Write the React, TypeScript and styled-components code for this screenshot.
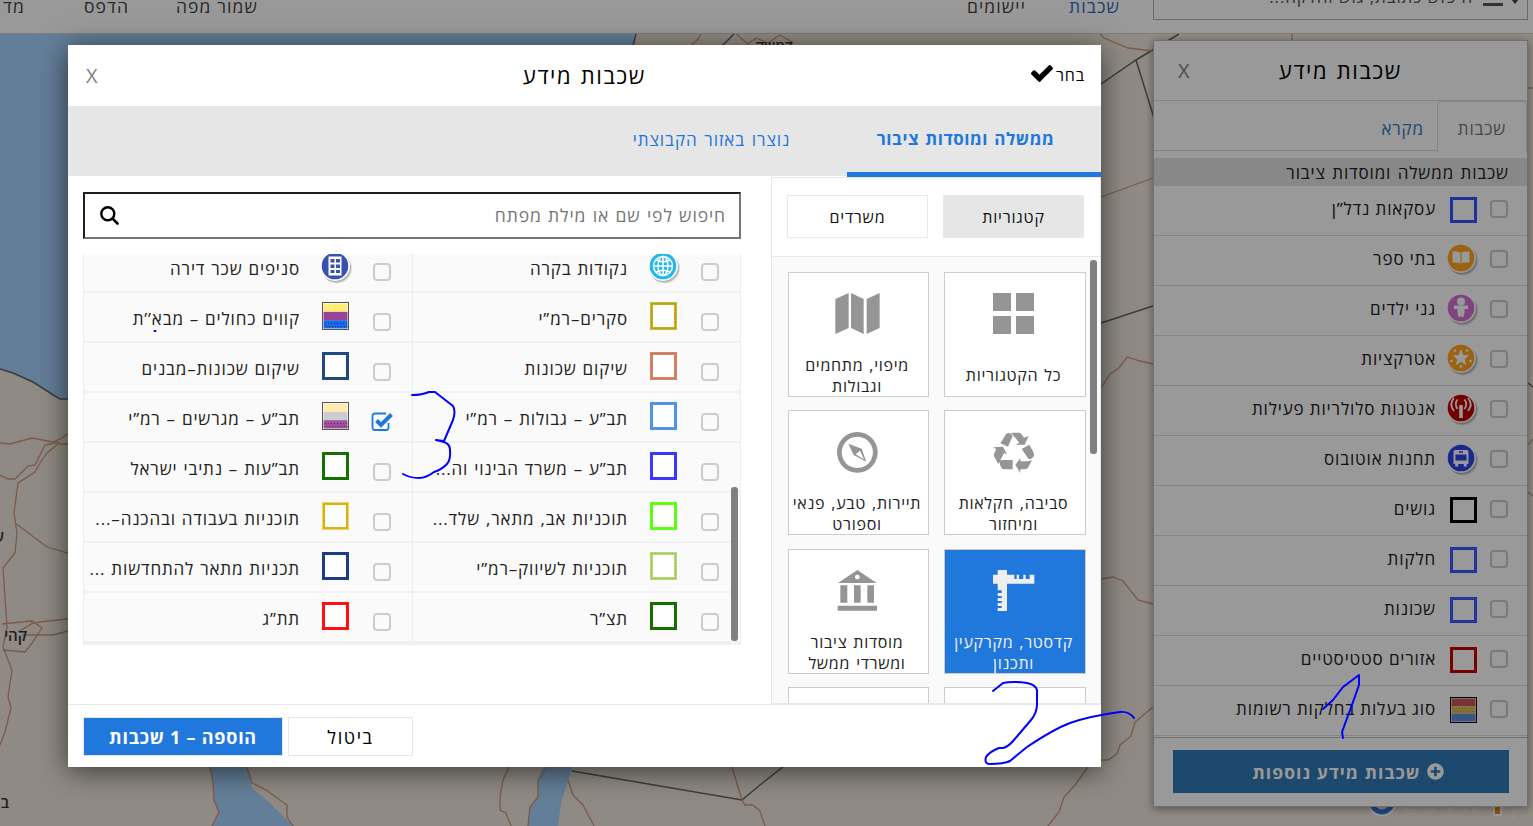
import React from "react";
import { FaPlusCircle } from "react-icons/fa";
import styled, { createGlobalStyle, css } from "styled-components";

const GlobalStyle = createGlobalStyle`
  * {
    box-sizing: border-box;
  }

  body {
    margin: 0;
    direction: rtl;
    font-family: "Open Sans", "DejaVu Sans", sans-serif;
    font-size: 17px;
    letter-spacing: 0.85px;
    word-spacing: 1.2px;
    color: #222;
    overflow: hidden;
  }

  button {
    font: inherit;
    letter-spacing: inherit;
    cursor: pointer;
  }
`;

const Page = styled.div`
  position: relative;
  width: 1533px;
  height: 826px;
  display: flex;
  flex-direction: column;
  overflow: hidden;
  background: #eee6da;
`;

const MapCanvas = styled.svg`
  position: absolute;
  inset: 0;
  direction: ltr;
`;

const TopBar = styled.header`
  position: relative;
  flex: none;
  display: flex;
  align-items: flex-start;
  height: 34px;
  padding-right: 5px;
  background: #fff;
  border-bottom: 1px solid #d0d0d0;
`;

const TopSearch = styled.div`
  display: flex;
  flex: none;
  align-items: flex-end;
  width: 375px;
  height: 20px;
  padding: 0 8px 11px 0;
  border: 1px solid #b0b0b0;
  border-top: 0;
  overflow: hidden;
  color: #555;
`;

const Caret = styled.span`
  width: 8px;
  height: 5px;
  margin-bottom: 4px;
  border: 4px solid transparent;
  border-top: 5px solid #444;
  border-bottom: 0;
`;

const MenuBar = styled.span`
  width: 20px;
  height: 3px;
  margin: 0 8px 2px 10px;
  background: #555;
`;

const SearchHint = styled.span`
  line-height: 24px;
  margin-bottom: -1px;
  word-spacing: 0;
  white-space: nowrap;
`;

const TopLink = styled.a<{ $gap: number; $active?: boolean }>`
  flex: none;
  margin-right: ${({ $gap }) => $gap}px;
  line-height: 24px;
  margin-top: -6px;
  font-size: 17.5px;
  letter-spacing: 1.1px;
  word-spacing: 0;
  white-space: nowrap;
  color: ${({ $active }) => ($active ? "#2d6fc0" : "#444")};
`;

const SidePanel = styled.aside`
  position: relative;
  display: flex;
  flex-direction: column;
  width: 375px;
  height: 767px;
  margin: 6px 5px 0 0;
  background: #fff;
  border: 1px solid #bbb;
  box-shadow: 0 2px 8px rgba(0, 0, 0, 0.4);
`;

const SideHeader = styled.div`
  display: flex;
  align-items: center;
  height: 60px;
  padding: 0 125px 0 24px;
  border-bottom: 1px solid #ddd;
`;

const Title = styled.h2`
  flex: 1;
  margin: -2px 0 0;
  font-size: 22px;
  font-weight: 400;
  letter-spacing: 1.6px;
  color: #000;
`;

const Close = styled.span`
  font-size: 20px;
  font-weight: 500;
  letter-spacing: 0;
  color: #808080;
`;

const SideTabs = styled.div`
  display: flex;
  height: 50px;
  margin-bottom: 7px;
  border-bottom: 1px solid #ddd;
`;

const SideTab = styled.span<{ $active?: boolean }>`
  display: flex;
  align-items: center;
  justify-content: center;
  height: 51px;
  padding: 3px 13px 0;
  color: #337ab7;

  ${({ $active }) =>
    $active &&
    css`
      width: 90px;
      color: #777;
      background: #fff;
      border: 1px solid #ddd;
      border-bottom: 0;
      border-radius: 4px 4px 0 0;
    `}
`;

const GroupTitle = styled.div`
  height: 28px;
  padding-right: 18px;
  line-height: 29px;
  background: #e3e3e3;
`;

const SideRow = styled.div`
  display: flex;
  align-items: center;
  height: 50px;
  padding: 0 19px 4px 0;
  word-spacing: 0;
  border-bottom: 1px solid #ddd;
`;

const SideFooter = styled.div`
  flex: 1;
  margin-top: 1px;
  padding: 12px 18px 12px 19px;
  border-top: 1px solid #bbb;
`;

const MoreLayers = styled.button`
  display: flex;
  align-items: center;
  justify-content: center;
  gap: 6px;
  width: 100%;
  height: 43px;
  padding: 0 0 0 14px;
  border: 0;
  font-size: 17.5px;
  font-weight: 700;
  letter-spacing: 1.1px;
  color: #fff;
  background: #337ab7;
`;

const Checkbox = styled.span`
  flex: none;
  width: 18px;
  height: 18px;
  border: 2px solid #ccc;
  border-radius: 4px;
`;

const Marker = styled.svg<{ $shift?: number; $lift?: number }>`
  flex: none;
  display: block;
  margin-top: ${({ $lift = 0 }) => -$lift}px;
  margin-right: ${({ $shift = 0 }) => $shift}px;
  overflow: visible;
`;

const SwatchCell = styled.span<{ $wide?: boolean }>`
  display: flex;
  flex: none;
  justify-content: center;
  width: ${({ $wide }) => ($wide ? 73 : 54)}px;
  padding: ${({ $wide }) => ($wide ? "0 3px 0 0" : "2px 0 0 1px")};
`;

const Overlay = styled.div`
  position: absolute;
  inset: 0;
  background: rgba(0, 0, 0, 0.4);
`;

const Modal = styled.section`
  position: absolute;
  top: 45px;
  left: 68px;
  display: flex;
  flex-direction: column;
  width: 1033px;
  height: 722px;
  background: #fff;
  box-shadow: 0 4px 26px rgba(0, 0, 0, 0.6);
`;

const ModalHeader = styled.div`
  display: flex;
  align-items: center;
  height: 61px;
  padding: 0 16px 0 18px;
`;

const Pick = styled.span`
  display: flex;
  align-items: center;
  gap: 3px;
  width: 439px;
  margin-top: -2px;
  font-size: 16px;
  color: #000;

  svg {
    margin-top: -3px;
  }
`;

const ModalTabs = styled.nav`
  display: flex;
  height: 70px;
  background: #e6e6e6;
`;

const ModalTab = styled.span<{ $active?: boolean }>`
  display: flex;
  align-items: center;
  justify-content: center;
  width: ${({ $active }) => ($active ? 254 : 271)}px;
  height: 71px;
  padding: ${({ $active }) => ($active ? "0 17px 1px 0" : "0 0 4px")};
  font-weight: ${({ $active }) => ($active ? 700 : 400)};
  letter-spacing: ${({ $active }) => ($active ? 0.55 : 0.95)}px;
  color: #2077dc;
  border-bottom: ${({ $active }) => ($active ? "5px solid #2077dc" : "0")};
`;

const ModalBody = styled.div`
  display: flex;
  height: 529px;
  border-bottom: 1px solid #e6e8e8;
`;

const Categories = styled.div`
  display: flex;
  flex-direction: column;
  width: 330px;
  margin-top: 1px;
  border: 1px solid #e8e8e8;
`;

const Modes = styled.div`
  display: flex;
  flex: none;
  gap: 15px;
  height: 79px;
  padding: 17px 16px 0 0;
  border-bottom: 1px solid #e6e6e6;
`;

const Mode = styled.button<{ $active?: boolean }>`
  width: 141px;
  height: 43px;
  padding: 0;
  font-size: 16px;
  letter-spacing: 0.8px;
  color: #111;
  background: ${({ $active }) => ($active ? "#e6e6e6" : "#fff")};
  border: 1px solid #e8e8e8;
`;

const CategoryScroll = styled.div`
  display: flex;
  gap: 3px;
  flex: 1;
  min-height: 0;
  padding: 3px 3px 0 0;
  overflow: hidden;
  background: #fafafa;
`;

const ScrollThumb = styled.div<{ $height: number }>`
  flex: none;
  width: 7px;
  height: ${({ $height }) => $height}px;
  border-radius: 3px;
  background: #808080;
`;

const CardGrid = styled.div`
  display: grid;
  grid-template-columns: 142px 141px;
  grid-auto-rows: 125px;
  gap: 13.5px 15px;
  margin: 11.8px 1px 0 0;
`;

const Card = styled.div<{ $active?: boolean }>`
  display: flex;
  flex-direction: column;
  align-items: center;
  justify-content: space-between;
  padding: 20px 4px 0 1px;
  overflow: hidden;
  color: ${({ $active }) => ($active ? "#f2f2f2" : "#222")};
  background: ${({ $active }) => ($active ? "#2077dc" : "#fff")};
  border: 1px solid #ccc;

  svg {
    flex: none;
    fill: ${({ $active }) => ($active ? "#eee" : "#959595")};
  }
`;

const CardLabel = styled.div`
  display: flex;
  align-items: center;
  height: 42px;
  margin-bottom: -1px;
  font-size: 16px;
  letter-spacing: 0.7px;
  line-height: 21px;
  text-align: center;
  white-space: pre;
`;

const Layers = styled.div`
  flex: 1;
  padding: 16px 30px 0 15px;
`;

const SearchBox = styled.div`
  display: flex;
  align-items: center;
  justify-content: space-between;
  height: 47px;
  margin-bottom: 15px;
  padding: 0 13px 1px 15px;
  border: 2px solid;
  border-color: #1f1f1f #767676 #767676 #1f1f1f;
  font-size: 17.5px;
  letter-spacing: 0.9px;
  word-spacing: 0.9px;
  line-height: 22px;
  color: #757575;
`;

const LayerList = styled.div`
  position: relative;
  height: 391px;
  overflow: hidden;
  background: #fafafa;
  border: 1px solid #eee;
  border-top: 0;
  border-bottom: 3px solid #f0f2f2;
`;

const LayerGrid = styled.div`
  display: grid;
  grid-template-columns: 328px 328px;
  grid-auto-rows: 50px;
  margin-top: -11px;
`;

const LayerCell = styled.div`
  display: flex;
  align-items: center;
  padding: 0 21px 2px 6px;
  border-bottom: 2px solid #f0f2f2;
  border-left: 1px solid #eceeee;

  &:nth-child(even) {
    border-left: 0;
  }
`;

const CellCheck = styled.span`
  flex: none;
  width: 18px;
  margin-top: 11px;
`;

const LayerName = styled.span`
  margin-top: 5px;
  word-spacing: 0.7px;
  white-space: nowrap;
`;

const ListThumb = styled(ScrollThumb)`
  position: absolute;
  top: 233px;
  right: 2px;
`;

const ModalFooter = styled.div`
  display: flex;
  justify-content: flex-end;
  gap: 5px;
  padding: 12px 0 0 15px;
`;

const FooterButton = styled.button<{ $primary?: boolean }>`
  width: ${({ $primary }) => ($primary ? 200 : 125)}px;
  height: 39px;
  padding: 0;
  font-size: 18px;
  font-weight: ${({ $primary }) => ($primary ? 700 : 400)};
  letter-spacing: ${({ $primary }) => ($primary ? 0.75 : 1.6)}px;
  color: ${({ $primary }) => ($primary ? "#fff" : "#000")};
  background: ${({ $primary }) => ($primary ? "#2077dc" : "#fff")};
  border: 1px solid #e6e6e6;
`;

const Ink = styled.svg`
  position: absolute;
  inset: 0;
  fill: none;
  stroke: #0000ff;
  stroke-width: 2;
  stroke-linecap: round;
  stroke-linejoin: round;
`;

type MarkerKind = "book" | "child" | "star" | "antenna" | "bus" | "globe" | "building";

interface Layer {
  name: string;
  color?: string;
  edge?: string;
  dotted?: boolean;
  bands?: string[];
  marker?: MarkerKind;
  checked?: boolean;
}

const sideLayers: Layer[] = [
  { name: "עסקאות נדל”ן", color: "#3550ff" },
  { name: "בתי ספר", marker: "book" },
  { name: "גני ילדים", marker: "child" },
  { name: "אטרקציות", marker: "star" },
  { name: "אנטנות סלולריות פעילות", marker: "antenna" },
  { name: "תחנות אוטובוס", marker: "bus" },
  { name: "גושים", color: "#000" },
  { name: "חלקות", color: "#3550ff", dotted: true },
  { name: "שכונות", color: "#3550ff", dotted: true },
  { name: "אזורים סטטיסטיים", color: "#c80000" },
  { name: "סוג בעלות בחלקות רשומות", bands: ["#c85858", "#d6c060", "#5f8ed8"] },
];

const modalLayers: Layer[] = [
  { name: "נקודות בקרה", marker: "globe" },
  { name: "סניפים שכר דירה", marker: "building" },
  { name: "סקרים–רמ”י", color: "#d9a514", edge: "#a8c83a", dotted: true },
  { name: "קווים כחולים – מבא’’ת", bands: ["#ffee78", "#984298", "#1c68e8"] },
  { name: "שיקום שכונות", color: "#d98268", dotted: true },
  { name: "שיקום שכונות–מבנים", color: "#1d4b80" },
  { name: "תב”ע – גבולות – רמ”י", color: "#4f92e6" },
  { name: "תב”ע – מגרשים – רמ”י", bands: ["#ffeab0", "#cccccc", "#a050a0"], checked: true },
  { name: "תב”ע – משרד הבינוי וה...", color: "#3838ff" },
  { name: "תב”עות – נתיבי ישראל", color: "#147000" },
  { name: "תוכניות אב, מתאר, שלד...", color: "#5cff10" },
  { name: "תוכניות בעבודה ובהכנה–...", color: "#dbb010", edge: "#ecd860" },
  { name: "תוכניות לשיווק–רמ”י", color: "#b4dc70", dotted: true },
  { name: "תכניות מתאר להתחדשות ...", color: "#1d3c88" },
  { name: "תצ”ר", color: "#147000" },
  { name: "תת”ג", color: "#ff1010" },
];

const markerColors: Record<MarkerKind, string> = {
  book: "#ffa51e",
  child: "#d870d0",
  star: "#ffa51e",
  antenna: "#c00000",
  bus: "#2c44e8",
  globe: "#22b8ec",
  building: "#3850b0",
};

const MarkerGlyph: React.FC<{ kind: MarkerKind }> = ({ kind }) => {
  switch (kind) {
    case "book":
      return <path d="M6.500 8.500q4.500-.500 8 1v11q-3-1.500-8-1zM15.500 9.500q3.500-1.500 8-1v11q-5-.500-8 1z" fill="#fff" />;
    case "child":
      return (
        <g fill="#fff">
          <circle cx="15" cy="8.500" r="4" />
          <path d="M8 12.500h14v3.500h-3.500V20l-1 4h-2l-.5-2-.5 2h-2l-1-4v-4H8z" />
        </g>
      );
    case "star":
      return (
        <g fill="#fff">
          <path d="M15 6l2.400 6 6 .3-4.700 3.900 1.700 6.100-5.400-3.500-5.400 3.500 1.700-6.100-4.700-3.900 6-.3z" />
          <circle cx="9" cy="7.500" r="1.300" />
          <circle cx="21" cy="7.500" r="1.300" />
          <circle cx="5.500" cy="18" r="1.300" />
          <circle cx="24.500" cy="18" r="1.300" />
          <circle cx="15" cy="23.500" r="1.300" />
        </g>
      );
    case "antenna":
      return (
        <g fill="none" stroke="#fff" strokeWidth="1.700">
          <path d="M11.500 6.500q-3.500 4.500 0 9.500M18.500 6.500q3.500 4.500 0 9.500M8 5q-5.500 6.500 0 13M22 5q5.500 6.500 0 13" />
          <path d="M15 12v13" strokeWidth="3.600" />
        </g>
      );
    case "bus":
      return (
        <g>
          <path d="M9 7h12q1.500 0 1.500 2v12h-1.700v2.500h-3V21h-5.600v2.500h-3V21H7.500V9Q7.500 7 9 7z" fill="#fff" />
          <path d="M9.500 11.500h11v6h-11zM13 8.300h4v1.500h-4z" fill="#2c44e8" />
        </g>
      );
    case "globe":
      return (
        <g fill="none" stroke="#fff" strokeWidth="1.500">
          <circle cx="15" cy="15" r="9.500" />
          <ellipse cx="15" cy="15" rx="5" ry="9.500" />
          <path d="M15 5.500v19M5.500 15h19M8 9q7 3.500 14 0M8 21q7-3.500 14 0" />
        </g>
      );
    case "building":
      return (
        <g>
          <path d="M8.500 5.500h13v19h-13z" fill="#fff" />
          <path
            d="M10.500 8h4v3.500h-4zM16 8h4v3.500h-4zM10.500 13.500h4V17h-4zM16 13.500h4V17h-4zM10.500 19h4v3h-4zM16 19h4v3h-4z"
            fill="#3850b0"
          />
        </g>
      );
  }
};

const LayerMarker: React.FC<{ layer: Layer; tall?: boolean }> = ({ layer, tall }) => {
  if (layer.marker) {
    return (
      <Marker
        width="30"
        height="30"
        viewBox="0 0 30 30"
        $shift={tall ? 0 : 6}
        $lift={tall ? 0 : 3}
      >
        <circle cx="17" cy="17.500" r="15" fill="#000" opacity="0.120" />
        <circle cx="16" cy="16.500" r="15" fill="#000" opacity="0.180" />
        <circle cx="15" cy="15" r="15" fill="#fff" />
        <circle cx="15" cy="15" r="13.300" fill={markerColors[layer.marker]} />
        <MarkerGlyph kind={layer.marker} />
      </Marker>
    );
  }
  const height = tall ? 28 : 26;
  if (layer.bands) {
    const band = (height - 3) / 3;
    return (
      <Marker width="27" height={height}>
        <rect x="0.500" y="0.500" width="26" height={height - 1} fill="#fff" stroke={tall ? "#555" : "#000"} />
        {layer.bands.map((fill, i) => (
          <rect key={fill} x="1.500" y={1.5 + i * band} width="24" height={band} fill={fill} />
        ))}
        <path
          d={tall ? "M3 21.500h22M4 24.500h22" : "M3 11.500h22M4 14.500h22"}
          stroke={tall ? "#222" : "#e05020"}
          strokeDasharray="1 2"
          opacity="0.600"
        />
      </Marker>
    );
  }
  return (
    <Marker width="27" height={height}>
      <rect
        x="1.500"
        y="1.500"
        width="24"
        height={height - 3}
        fill={tall ? "#fff" : "none"}
        stroke={layer.color}
        strokeWidth="3"
      />
      {layer.edge && (
        <rect x="0.500" y="0.500" width="26" height={height - 1} fill="none" stroke={layer.edge} />
      )}
      {layer.dotted && (
        <rect
          x="1.500"
          y="1.500"
          width="24"
          height={height - 3}
          fill="none"
          stroke={tall ? "#86703a" : "#8c9cff"}
          strokeDasharray="1 2"
          opacity="0.600"
        />
      )}
    </Marker>
  );
};

const CheckedBox: React.FC = () => (
  <Marker width="22" height="19" viewBox="0 0 22 19" $shift={-2}>
    <path
      d="M17.500 11v4.500a2.500 2.500 0 0 1-2.500 2.500H4a2.500 2.500 0 0 1-2.500-2.500V4A2.500 2.500 0 0 1 4 1.500h11"
      fill="none"
      stroke="#2077dc"
      strokeWidth="1.800"
    />
    <path d="M5.500 8.500l4.500 4.500L20.500 2.500" fill="none" stroke="#2077dc" strokeWidth="4" />
  </Marker>
);

// category drawings share a 123 unit square
const CategoryIcon: React.FC<{ kind: string }> = ({ kind }) => (
  <svg width="41" height="41" viewBox="0 0 123 123" overflow="visible">
    {kind === "all" && <path d="M0 0h54v54H0zM69 0h54v54H69zM0 69h54v54H0zM69 69h54v54H69z" />}
    {kind === "map" && (
      <path d="M-5 18L35 0v105l-40 18zM42 0l38 18v105l-38-18zM89 18l39-18v105l-39 18z" />
    )}
    {kind === "recycle" && (
      <path
        transform="translate(0 5)"
        d="M22 32L38 6q3-6 9-5 10 2 12 9L45 42zM54 0h24q5 0 8 5l7 10 14-5-12 26H68l11-6zM86 49l23-13 12 22q4 8 0 14-6 8-14 8zM67 97l15-21v10h18q10 0 17-4l-11 22q-3 6-10 6H82v11zM20 84q4-2 10-2h29v28H34q-6 0-9-5-6-10-5-21zM0 44l30-2 12 23-9-4-17 34L4 72q-3-5 0-10l6-12z"
      />
    )}
    {kind === "compass" && (
      <path
        fillRule="evenodd"
        transform="translate(0 3)"
        d="M61 0a61 61 0 1 0 .1 0zM61 14a47 47 0 1 1-.1 0zM34 35l40 15 14 39-38-20zM69 56l-13 11 25 15z"
      />
    )}
    {kind === "landmark" && (
      <path
        fillRule="evenodd"
        d="M61 0l58 39H3zM61 14a7 7 0 1 0 .1 0zM10 46h21v52H10zM51 46h20v52H51zM91 46h20v52H91zM2 107h118v15H2z"
      />
    )}
    {kind === "caliper" && (
      <path d="M14 0h28v14h22v13h7V14h7v13h13V14h7v13h12V14h14v27H42v82H14v-9h12v-6H14v-9h12v-6H14v-9h12v-6H14v-9h12v-8H14V41H0V14h14z" />
    )}
  </svg>
);

const categories = [
  { label: "כל הקטגוריות", icon: "all" },
  { label: "מיפוי, מתחמים\nוגבולות", icon: "map" },
  { label: "סביבה, חקלאות\nומיחזור", icon: "recycle" },
  { label: "תיירות, טבע, פנאי\nוספורט", icon: "compass" },
  { label: "קדסטר, מקרקעין\nותכנון", icon: "caliper", active: true },
  { label: "מוסדות ציבור\nומשרדי ממשל", icon: "landmark" },
  { label: "", icon: "" },
  { label: "", icon: "" },
];

const BaseMap: React.FC = () => (
  <MapCanvas width="1533" height="826">
    <g fill="#a6d2fd">
      <path d="M0 0H640L633 45V399H60L55 396 33 382 13 373 0 369z" />
      <path d="M210 760h36l6 28 18 15 23 23h-81l7-14-5-12-1-17z" />
      <path d="M545 760h28l-1 8-11 35-3 23h-30l2-19 8-10v-17z" />
    </g>
    <g fill="none" stroke="#666" strokeWidth="1.500">
      <path d="M0 369l13 4 20 9 22 14 5 3h10" />
      <path d="M636 34l-3 12M734 34l-12 12M1179 34l-43 26-35 24M1136 60l18 58M1101 323l52-17" />
      <path d="M572 771l170 29 18-15 24-19M1528 383l5 4" />
    </g>
    <g fill="none" stroke="#cf967c" strokeWidth="1.300">
      <path d="M0 443l10 1 22-6 21 4 9-4 8-6M68 444H58l-11 9-7 10-5 9-17 11-4 30 3 20-2 20-12 15 4 59-4 20 9 23-4 27 3 11-6 24-5 13" />
      <path d="M0 475l8 4h7l13-13 7-1 10-20 14-3M15 523l32 24 21 6M68 619l-20 2-15 2-15 9M68 631l-15 4H22" />
      <path d="M2 624l30-3 10 7-10 15-7 9-22-2M210 767l3 16 1 17 5 12-7 14M247 767l5 16 14 7 21 15v12l6 9" />
      <path d="M509 767l-6 13-3 17v13l6 3 5 13M547 767l-9 13v17l-8 10-2 19M568 780l5 15 10 10 11 21M732 767l10 33 3 5h8l7 6 5 15" />
      <path d="M701 34l-3 5-6 6M736 34l12 10 8-6 12 5 12-8 12 7M1100 34l4 4 24 10 25 3M1292 34v8M1101 197l52-19" />
      <path d="M1101 388l9-14 9-6 8-11 13 4 13 3M1101 579l12-2 10 4 15 19 15 4M1153 707l-18 15-4 14-11 9-3 9-9 6h-7" />
      <path d="M1088 767l-13 18-11 12-5 15-11 14M1528 88h5M1528 445l5-6M1528 492l5 4" />
    </g>
    <g fill="#333" fontSize="15" fontWeight="600" textAnchor="end" letterSpacing="0">
      <text x="793" y="52">דמשק</text>
      <text x="27" y="641">קהי</text>
      <text x="4" y="542">ש</text>
      <text x="9" y="808">ב</text>
    </g>
    <circle cx="1382" cy="802" r="11" fill="none" stroke="#fff" strokeWidth="7" />
    <circle cx="1382" cy="802" r="10" fill="none" stroke="#3a78d8" strokeWidth="5" />
    <text x="1398" y="811" fill="#fff" opacity="0.500" fontSize="28" letterSpacing="4">
      GovMap
    </text>
    <path d="M1493 800h9v16h-9z" fill="#fff" />
    <path d="M1495 800h5v14h-5z" fill="#f09010" />
  </MapCanvas>
);

const LayersPanel: React.FC = () => (
  <SidePanel>
    <SideHeader>
      <Title>שכבות מידע</Title>
      <Close>X</Close>
    </SideHeader>
    <SideTabs>
      <SideTab $active>שכבות</SideTab>
      <SideTab>מקרא</SideTab>
    </SideTabs>
    <GroupTitle>שכבות ממשלה ומוסדות ציבור</GroupTitle>
    {sideLayers.map((layer) => (
      <SideRow key={layer.name}>
        <Checkbox />
        <SwatchCell>
          <LayerMarker layer={layer} />
        </SwatchCell>
        {layer.name}
      </SideRow>
    ))}
    <SideFooter>
      <MoreLayers>
        <FaPlusCircle size={17} />
        שכבות מידע נוספות
      </MoreLayers>
    </SideFooter>
  </SidePanel>
);

const LayersModal: React.FC = () => (
  <Modal>
    <ModalHeader>
      <Pick>
        בחר
        <svg width="22" height="17" viewBox="121 334 1550 1188">
          <path d="M1671 566q0 40-28 68l-724 724-136 136q-28 28-68 28t-68-28l-136-136-362-362q-28-28-28-68t28-68l136-136q28-28 68-28t68 28l294 295 656-657q28-28 68-28t68 28l136 136q28 28 28 68z" />
        </svg>
      </Pick>
      <Title>שכבות מידע</Title>
      <Close>X</Close>
    </ModalHeader>
    <ModalTabs>
      <ModalTab $active>ממשלה ומוסדות ציבור</ModalTab>
      <ModalTab>נוצרו באזור הקבוצתי</ModalTab>
    </ModalTabs>
    <ModalBody>
      <Categories>
        <Modes>
          <Mode $active>קטגוריות</Mode>
          <Mode>משרדים</Mode>
        </Modes>
        <CategoryScroll>
          <ScrollThumb $height={194} />
          <CardGrid>
            {categories.map((category, i) => (
              <Card key={i} $active={category.active}>
                <CategoryIcon kind={category.icon} />
                <CardLabel>{category.label}</CardLabel>
              </Card>
            ))}
          </CardGrid>
        </CategoryScroll>
      </Categories>
      <Layers>
        <SearchBox>
          חיפוש לפי שם או מילת מפתח
          <svg width="19" height="19" fill="none" stroke="#000">
            <circle cx="7.800" cy="7.800" r="6.500" strokeWidth="2.400" />
            <path d="M12.500 12.500l5 5" strokeWidth="2.600" strokeLinecap="round" />
          </svg>
        </SearchBox>
        <LayerList>
          <LayerGrid>
            {modalLayers.map((layer) => (
              <LayerCell key={layer.name}>
                <CellCheck>{layer.checked ? <CheckedBox /> : <Checkbox as="div" />}</CellCheck>
                <SwatchCell $wide>
                  <LayerMarker layer={layer} tall />
                </SwatchCell>
                <LayerName>{layer.name}</LayerName>
              </LayerCell>
            ))}
          </LayerGrid>
          <ListThumb $height={154} />
        </LayerList>
      </Layers>
    </ModalBody>
    <ModalFooter>
      <FooterButton>ביטול</FooterButton>
      <FooterButton $primary>הוספה – 1 שכבות</FooterButton>
    </ModalFooter>
  </Modal>
);

const App: React.FC = () => (
  <Page>
    <GlobalStyle />
    <BaseMap />
    <TopBar>
      <TopSearch>
        <Caret />
        <MenuBar />
        <SearchHint>חיפוש כתובת, גוש וחלקה...</SearchHint>
      </TopSearch>
      <TopLink $gap={33} $active>
        שכבות
      </TopLink>
      <TopLink $gap={43}>יישומים</TopLink>
      <TopLink $gap={709}>שמור מפה</TopLink>
      <TopLink $gap={47}>הדפס</TopLink>
      <TopLink $gap={59}>מד</TopLink>
    </TopBar>
    <LayersPanel />
    <Overlay />
    <LayersModal />
    <Ink width="1533" height="826">
      <path d="M1323 709l10-9 10-13 16-12v10l-6 17-11 30 1 6" />
      <path d="M993 691l10-8q10-2 24 0 9 2 10 7v14q0 9-6 16l-17 20q-6 7-11 8h-4q-10 4-13 9-2 7 4 7 14 0 20-3l17-14q27-18 43-24 20-7 50-11 9-1 14 6" />
      <path d="M412 395q10 0 17-3h6l18 14q3 5 0 14l-9 21-8-1 8 2q6 2 6 8 1 9-3 14-6 6-13 8-8 6-15 6-9 0-16-4" />
      <path d="M154.500 331h1" />
    </Ink>
  </Page>
);

export default App;
